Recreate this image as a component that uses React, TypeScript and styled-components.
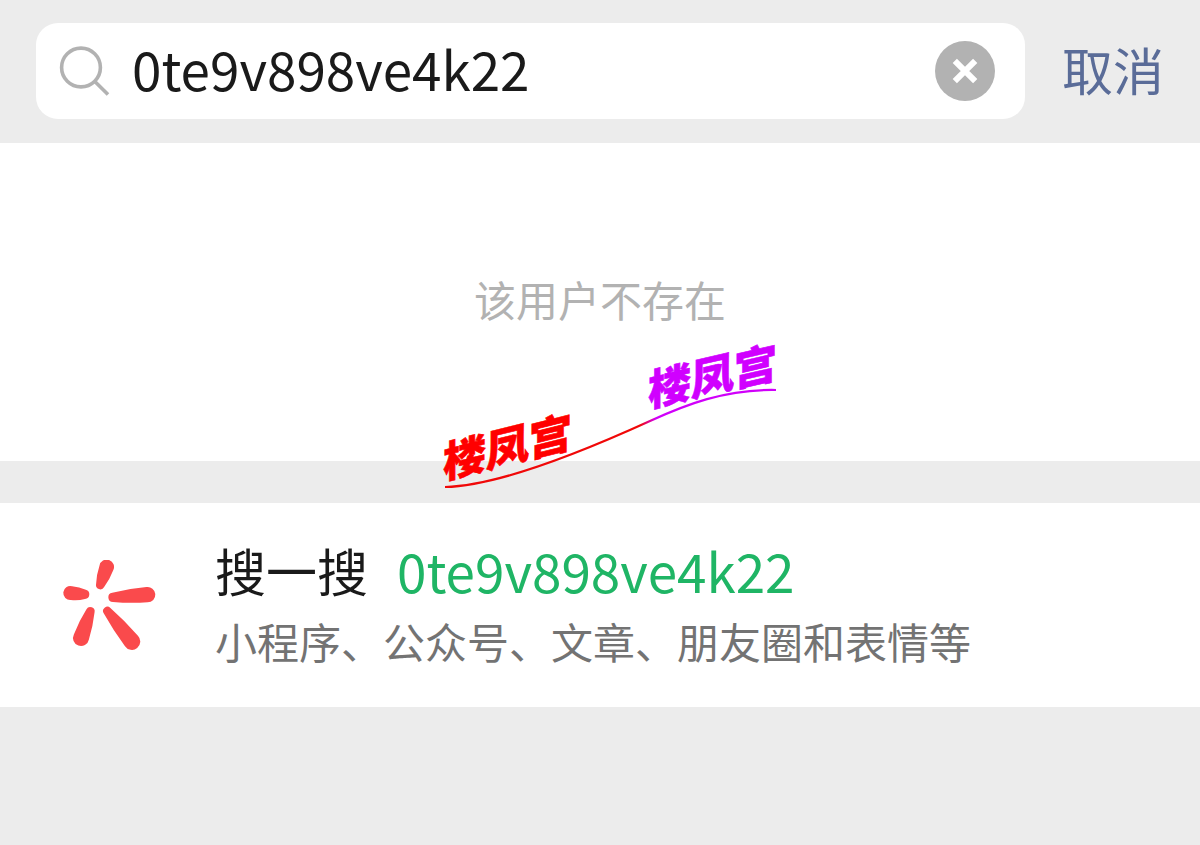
import React, { useState } from "react";
import styled, { createGlobalStyle } from "styled-components";

const GlobalStyle = createGlobalStyle`
  *, *::before, *::after { box-sizing: border-box; }
  body {
    margin: 0;
    background: #ececec;
    color: #1a1a1a;
    font-family: "Noto Sans CJK SC", "Noto Sans", sans-serif;
  }
  button, input { font: inherit; }
`;

const Header = styled.header`
  display: flex;
  align-items: center;
  gap: 37px;
  padding: 23px 36px 24px;
`;

const SearchBox = styled.label`
  flex: 1;
  min-width: 0;
  height: 96px;
  display: flex;
  align-items: center;
  gap: 22px;
  padding: 0 30px 0 22px;
  border-radius: 22px;
  background: #ffffff;
`;

const SearchInput = styled.input`
  flex: 1;
  min-width: 0;
  height: 86px;
  padding: 0 0 6px;
  border: 0;
  outline: 0;
  background: transparent;
  color: #1a1a1a;
  font-size: 53px;
`;

const ClearButton = styled.button`
  flex: none;
  width: 60px;
  height: 60px;
  display: grid;
  place-items: center;
  padding: 0;
  border: 0;
  border-radius: 50%;
  background: #b2b2b2;
  cursor: pointer;
`;

const CancelButton = styled.button`
  flex: none;
  padding: 0 0 4px;
  border: 0;
  background: transparent;
  color: #5a6c98;
  font-size: 51px;
  line-height: 72px;
  cursor: pointer;
`;

const EmptyState = styled.section`
  position: relative;
  display: flex;
  justify-content: center;
  padding: 121px 36px 127px;
  margin-bottom: 42px;
  background: #ffffff;
`;

const EmptyText = styled.p`
  margin: 0;
  color: #b2b2b2;
  font-size: 42px;
  line-height: 70px;
`;

const Watermark = styled.div`
  position: absolute;
  top: 180px;
  left: 0;
  right: 0;
  display: flex;
  justify-content: center;
  pointer-events: none;

  text {
    font-size: 43px;
    font-weight: 900;
  }
`;

const ResultRow = styled.a`
  display: flex;
  align-items: center;
  gap: 59px;
  padding: 32px 36px 30px 62px;
  background: #ffffff;
  color: inherit;
  text-decoration: none;
`;

const ResultText = styled.div`
  min-width: 0;
  flex: 1;
`;

const ResultTitle = styled.div`
  display: flex;
  gap: 29px;
  font-size: 51px;
  line-height: 70px;
`;

const Keyword = styled.span`
  color: #1fb565;
  font-size: 53px;
`;

const ResultNote = styled.div`
  color: #737373;
  font-size: 42px;
  line-height: 72px;
`;

type Petal = { wide: [number, number, number]; narrow: [number, number, number] };

const petals: Petal[] = [
  { wide: [200, 78, 22], narrow: [181, 132, 13] },
  { wide: [91, 156, 21], narrow: [134, 160, 14] },
  { wide: [323, 161, 23], narrow: [219, 169, 14] },
  { wide: [123, 291, 24], narrow: [151, 211, 13] },
  { wide: [276, 302, 25], narrow: [202, 210, 13] },
];

/* Two circles of different radius joined by slightly bulging sides. */
function petalPath({ wide, narrow }: Petal): string {
  const [x1, y1, r1] = wide;
  const [x2, y2, r2] = narrow;
  const axis = Math.atan2(y2 - y1, x2 - x1);
  const spread = Math.acos((r1 - r2) / Math.hypot(x2 - x1, y2 - y1));
  const at = (x: number, y: number, r: number, a: number) =>
    `${(x + r * Math.cos(a)).toFixed(1)} ${(y + r * Math.sin(a)).toFixed(1)}`;
  const a = axis + spread;
  const b = axis - spread;
  const mx = (x1 + x2) / 2;
  const my = (y1 + y2) / 2;
  const bulge = (r1 + r2) / 2 + 4;
  return (
    `M${at(x1, y1, r1, a)}A${r1} ${r1} 0 1 1 ${at(x1, y1, r1, b)}` +
    `Q${at(mx, my, bulge, b)} ${at(x2, y2, r2, b)}` +
    `A${r2} ${r2} 0 0 1 ${at(x2, y2, r2, a)}` +
    `Q${at(mx, my, bulge, a)} ${at(x1, y1, r1, a)}Z`
  );
}

const SearchIcon = () => (
  <svg width="52" height="52" viewBox="0 0 52 52" fill="none" stroke="#b2b2b2" strokeWidth="3.6" aria-hidden="true">
    <circle cx="23" cy="22.5" r="19.4" />
    <path d="M36.6 36.2L50 49.6" />
  </svg>
);

const CrossIcon = () => (
  <svg width="28" height="28" viewBox="0 0 28 28" stroke="#ffffff" strokeWidth="6" aria-hidden="true">
    <path d="M3.8 3.8L24.2 24.2M24.2 3.8L3.8 24.2" />
  </svg>
);

const SparkLogo = () => (
  <svg width="94" height="92" viewBox="66 57 282 276" fill="#fa4a4c" aria-hidden="true">
    {petals.map((petal, i) => (
      <path key={i} d={petalPath(petal)} />
    ))}
  </svg>
);

export default function App() {
  const [query, setQuery] = useState("0te9v898ve4k22");

  return (
    <>
      <GlobalStyle />
      <Header>
        <SearchBox>
          <SearchIcon />
          <SearchInput
            type="text"
            aria-label="搜索"
            value={query}
            onChange={(e) => setQuery(e.target.value)}
          />
          <ClearButton type="button" aria-label="清除" onClick={() => setQuery("")}>
            <CrossIcon />
          </ClearButton>
        </SearchBox>
        <CancelButton type="button">取消</CancelButton>
      </Header>
      <main>
        <EmptyState>
          <EmptyText>该用户不存在</EmptyText>
          <Watermark>
            <svg width="432" height="190" viewBox="384 323 432 190">
              <defs>
                <linearGradient id="swoosh" gradientUnits="userSpaceOnUse" x1="640" y1="0" x2="656" y2="0">
                  <stop offset="0" stopColor="#f00808" />
                  <stop offset="1" stopColor="#d000fa" />
                </linearGradient>
              </defs>
              <path
                d="M445 487C490 486 560 462 650 421C685 405 725 389 776 390"
                fill="none"
                stroke="url(#swoosh)"
                strokeWidth="2.2"
              />
              <g strokeWidth="0.6">
                <text transform="translate(443 479) skewY(-14)" fill="#ff0000" stroke="#ff0000">楼凤宫</text>
                <text transform="translate(648 407) skewY(-13)" fill="#d000ff" stroke="#d000ff">楼凤宫</text>
              </g>
            </svg>
          </Watermark>
        </EmptyState>
        <ResultRow href="#search">
          <SparkLogo />
          <ResultText>
            <ResultTitle>
              <span>搜一搜</span>
              <Keyword>{query}</Keyword>
            </ResultTitle>
            <ResultNote>小程序、公众号、文章、朋友圈和表情等</ResultNote>
          </ResultText>
        </ResultRow>
      </main>
    </>
  );
}
